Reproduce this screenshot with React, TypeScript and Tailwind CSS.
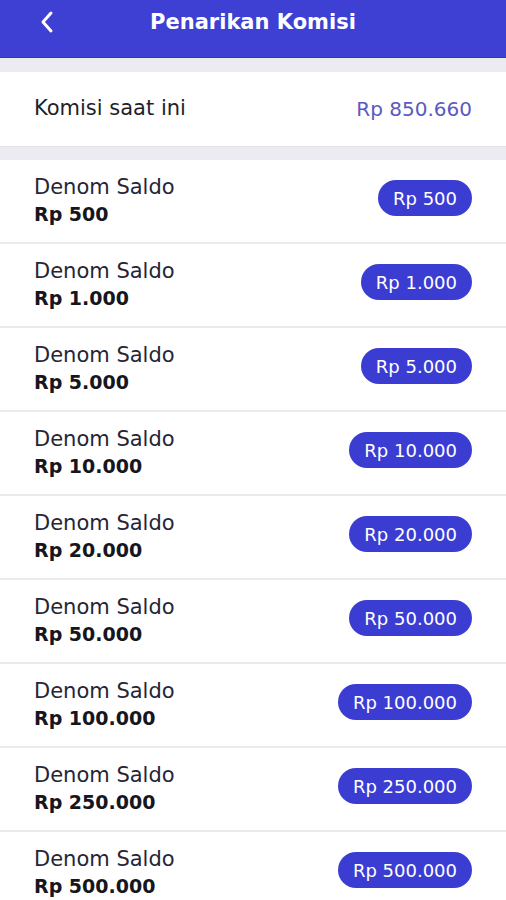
const denoms = ['500', '1.000', '5.000', '10.000', '20.000', '50.000', '100.000', '250.000', '500.000']

export default function App() {
  return (
    <div className="min-h-screen bg-white" style={{ fontFamily: '"DejaVu Sans", sans-serif' }}>
      {/* header */}
      <div className="h-[58px] bg-[#3e3fd3] border-b border-[#3334c4] flex items-center relative">
        <svg className="absolute left-[39px] top-[10px]" width="16" height="24" viewBox="0 0 16 24" fill="none">
          <path d="M12 3L4 12L12 21" stroke="white" strokeWidth="3" strokeLinecap="round" strokeLinejoin="round" />
        </svg>
        <h1 className="w-full text-center text-white text-[21px] font-bold -mt-[12px]">Penarikan Komisi</h1>
      </div>
      <div className="h-[14px] bg-[#ebebf1]" />
      <div className="h-[75px] flex items-center justify-between px-[34px] border-b border-[#e2e2e8]">
        <span className="text-[21px] text-[#1f1f2b]">Komisi saat ini</span>
        <span className="text-[20px] text-[#5a5ac2]">Rp 850.660</span>
      </div>
      <div className="h-[13px] bg-[#ebebf1]" />
      {denoms.map((d) => (
        <div key={d} className="h-[84px] border-b-2 border-[#ebebef] flex items-start justify-between px-[34px] pt-[14px]">
          <div className="flex flex-col leading-[27px]">
            <span className="text-[21px] text-[#252536]">Denom Saldo</span>
            <span className="text-[19px] font-bold text-[#161620]">Rp {d}</span>
          </div>
          <span className="mt-[6px] h-[36px] px-[15px] rounded-full bg-[#3b3dd2] text-white text-[18px] flex items-center">Rp {d}</span>
        </div>
      ))}
    </div>
  )
}
